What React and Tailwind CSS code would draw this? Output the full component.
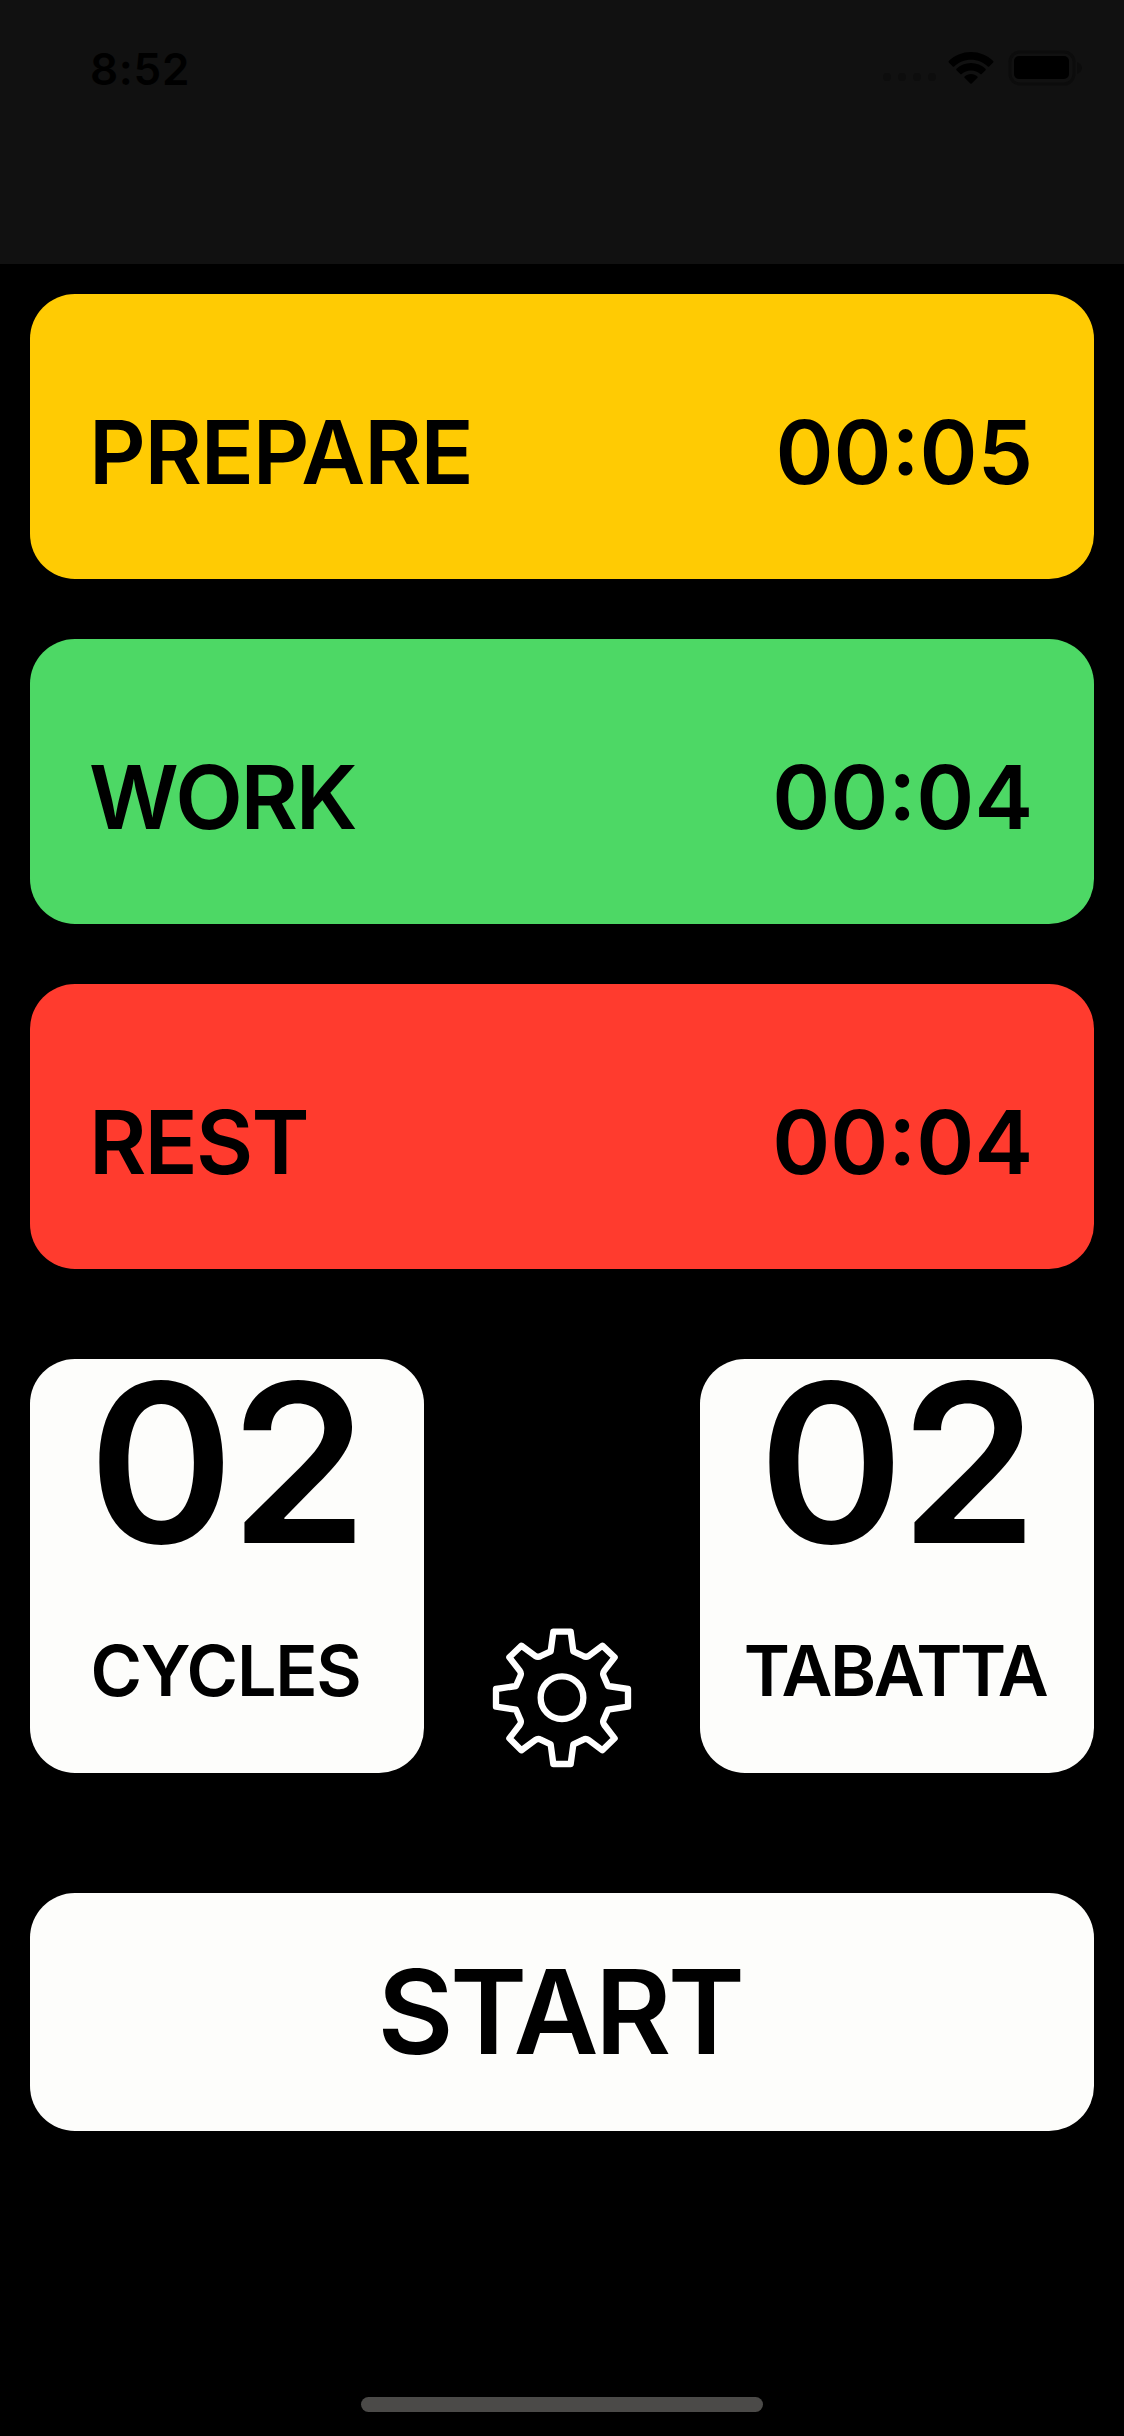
const phases = [
  { label: "PREPARE", time: "00:05", card: "bg-[#ffcb03]", spacing: "tracking-[-1.2px]" },
  { label: "WORK", time: "00:04", card: "bg-[#4dd865]", spacing: "tracking-[-2.2px]" },
  { label: "REST", time: "00:04", card: "bg-[#ff3b2e]", spacing: "tracking-[-1.8px]" },
];

function StatusBar() {
  return (
    <header className="flex h-[264px] items-start justify-between bg-[#111111] pl-[90px] pr-[41px] pt-[47px] text-black">
      <span className="text-[44px] font-semibold leading-none tracking-[0.7px]">8:52</span>
      <div className="flex items-center pt-[3px]">
        <div className="mt-[18px] flex gap-[7px] pr-[12px]">
          {[0, 1, 2, 3].map((dot) => (
            <span key={dot} className="size-[8px] rounded-full bg-[#0d0d0d]" />
          ))}
        </div>
        <svg className="h-[34px] w-[46px]" viewBox="0 0 46 34" fill="currentColor">
          <path d="M23 1C14.300 1 6.400 4.400 .8 10.100a1 1 0 0 0 0 1.400l4 4a1 1 0 0 0 1.400 0C10.500 11.200 16.500 8.700 23 8.700s12.500 2.500 16.800 6.800a1 1 0 0 0 1.400 0l4-4a1 1 0 0 0 0-1.400C39.600 4.400 31.700 1 23 1Z" />
          <path d="M23 12c-5.600 0-10.700 2.200-14.500 5.800a1 1 0 0 0 0 1.400l3.800 3.800a1 1 0 0 0 1.400 0c2.500-2.200 5.700-3.500 9.300-3.500s6.800 1.300 9.300 3.500a1 1 0 0 0 1.400 0l3.800-3.800a1 1 0 0 0 0-1.400C33.700 14.200 28.600 12 23 12Z" />
          <path d="M23 23c-2.500 0-4.700.9-6.400 2.400a1 1 0 0 0 0 1.400l5.700 5.700a1 1 0 0 0 1.400 0l5.700-5.700a1 1 0 0 0 0-1.400C27.700 23.900 25.500 23 23 23Z" />
        </svg>
        <svg className="ml-[14px] h-[36px] w-[75px]" viewBox="0 0 75 36">
          <rect x="2" y="2" width="64" height="32" rx="10" fill="none" stroke="#0c0c0c" strokeWidth="3" />
          <rect x="6" y="6" width="55" height="23" rx="5" fill="currentColor" />
          <path d="M69 12c3 1 5 3.500 5 6s-2 5-5 6Z" fill="#0c0c0c" />
        </svg>
      </div>
    </header>
  );
}

function PhaseCard({ phase }) {
  return (
    <button className={`flex h-[285px] items-start justify-between rounded-[45px] pl-[59px] pr-[61px] pt-[114px] text-[88px] font-semibold leading-none ${phase.card}`}>
      <span className={phase.spacing}>{phase.label}</span>
      <span>{phase.time}</span>
    </button>
  );
}

function CounterCard({ value, label, labelStyle }) {
  return (
    <button className="flex h-[414px] w-[394px] flex-col items-center rounded-[45px] bg-[#fdfdfb] font-semibold leading-none">
      <span className="-mt-[7px] pr-[2px] text-[221px] tracking-[-4px]">{value}</span>
      <span className={`mt-[63px] text-[70px] ${labelStyle}`}>{label}</span>
    </button>
  );
}

function GearIcon() {
  return (
    <svg className="h-[140px] w-[140px]" viewBox="65 84 420 420" fill="none" stroke="#ffffff" strokeWidth="19" strokeLinejoin="round">
      <path d="M249 95H301L309 154L339 168Q347 173 355 168L396 137L433 172L402 212Q396 220 400 228L413 258L473 267V320L413 329L400 359Q396 367 402 375L433 415L396 451L355 420Q347 414 339 419L309 433L301 492H249L241 433L211 419Q203 414 195 420L153 451L117 415L148 375Q154 367 150 359L137 329L77 320V267L137 258L150 228Q154 220 148 212L117 172L153 137L195 168Q203 173 211 168L241 154Z" />
      <circle cx="275" cy="293" r="64" />
    </svg>
  );
}

export default function App() {
  return (
    <div className="flex h-[2436px] w-[1124px] flex-col bg-black font-['Inter','Liberation_Sans',sans-serif] text-black">
      <StatusBar />
      <main className="flex flex-col px-[30px] pt-[30px]">
        <section className="flex flex-col gap-[60px]">
          {phases.map((phase) => (
            <PhaseCard key={phase.label} phase={phase} />
          ))}
        </section>
        <section className="mt-[90px] flex items-end justify-between">
          <CounterCard value="02" label="CYCLES" labelStyle="pr-[3px] tracking-[-1.3px]" />
          <button className="mb-[5px]" aria-label="Settings">
            <GearIcon />
          </button>
          <CounterCard value="02" label="TABATTA" labelStyle="pr-[4px] tracking-[-2.4px]" />
        </section>
        <button className="mt-[120px] flex h-[238px] items-start justify-center rounded-[45px] bg-[#fdfdfb] pr-[5px] pt-[60px] text-[117px] font-semibold leading-none tracking-[-3.6px]">
          START
        </button>
      </main>
      <div className="mb-[24px] mt-auto h-[15px] w-[402px] self-center rounded-full bg-[#4b4a48]" />
    </div>
  );
}
